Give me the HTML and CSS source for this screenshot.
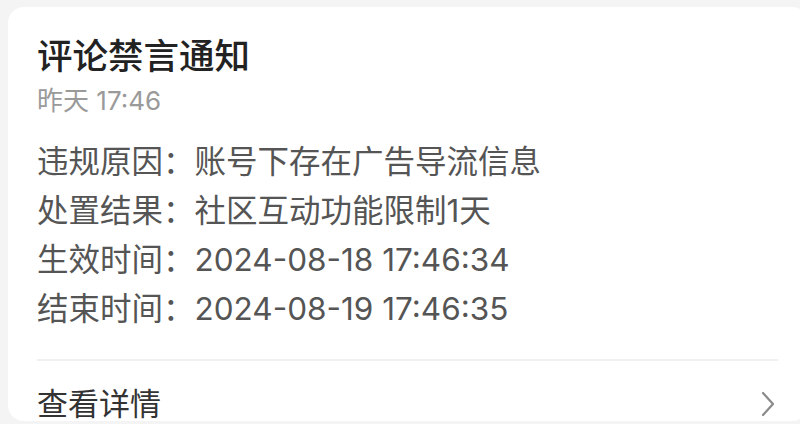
FILE: index.html
```html
<!DOCTYPE html>
<html lang="zh-CN">
<head>
<meta charset="utf-8">
<link rel="stylesheet" href="styles.css">
</head>
<body>
<div class="card">
  <h1 class="title">评论禁言通知</h1>
  <div class="time">昨天 17:46</div>
  <div class="rows">
    <div class="row">违规原因：账号下存在广告导流信息</div>
    <div class="row">处置结果：社区互动功能限制1天</div>
    <div class="row">生效时间：2024-08-18 17:46:34</div>
    <div class="row">结束时间：2024-08-19 17:46:35</div>
  </div>
  <div class="divider"></div>
  <div class="more">
    <span>查看详情</span>
    <svg class="chev" width="16" height="26" viewBox="0 0 16 26"><path d="M3 2 L13 13 L3 24" fill="none" stroke="#8a8a8a" stroke-width="2.2" stroke-linecap="round" stroke-linejoin="round"/></svg>
  </div>
</div>
</body>
</html>
```
FILE: styles.css
```css
html, body {
  margin: 0;
  padding: 0;
  background: #f4f4f4;
  width: 800px;
  height: 424px;
  overflow: hidden;
}
body {
  padding: 7px 0 0 8px;
  box-sizing: border-box;
  font-family: "Inter", "Noto Sans CJK SC", "Noto Sans", sans-serif;
}
.card {
  background: #fff;
  border-radius: 16px;
  width: 800px;
  height: 414px;
  box-sizing: border-box;
  padding: 27px 22px 0 29px;
}
.title {
  margin: 0;
  font-size: 35.5px;
  font-weight: 500;
  color: #222;
  line-height: 46px;
}
.time {
  margin-top: 4px;
  font-size: 26px;
  color: #9a9a9a;
  line-height: 33px;
}
.rows {
  margin-top: 20px;
}
.row {
  font-size: 31.5px;
  line-height: 49px;
  color: #555;
}
.divider {
  margin-top: 26px;
  height: 2px;
  background: #f0f0f0;
  width: 741px;
}
.more {
  display: flex;
  align-items: center;
  justify-content: space-between;
  width: 741px;
  margin-top: 23px;
  font-size: 31px;
  color: #333;
  line-height: 40px;
}
.chev {
  margin-right: 2px;
}
```
